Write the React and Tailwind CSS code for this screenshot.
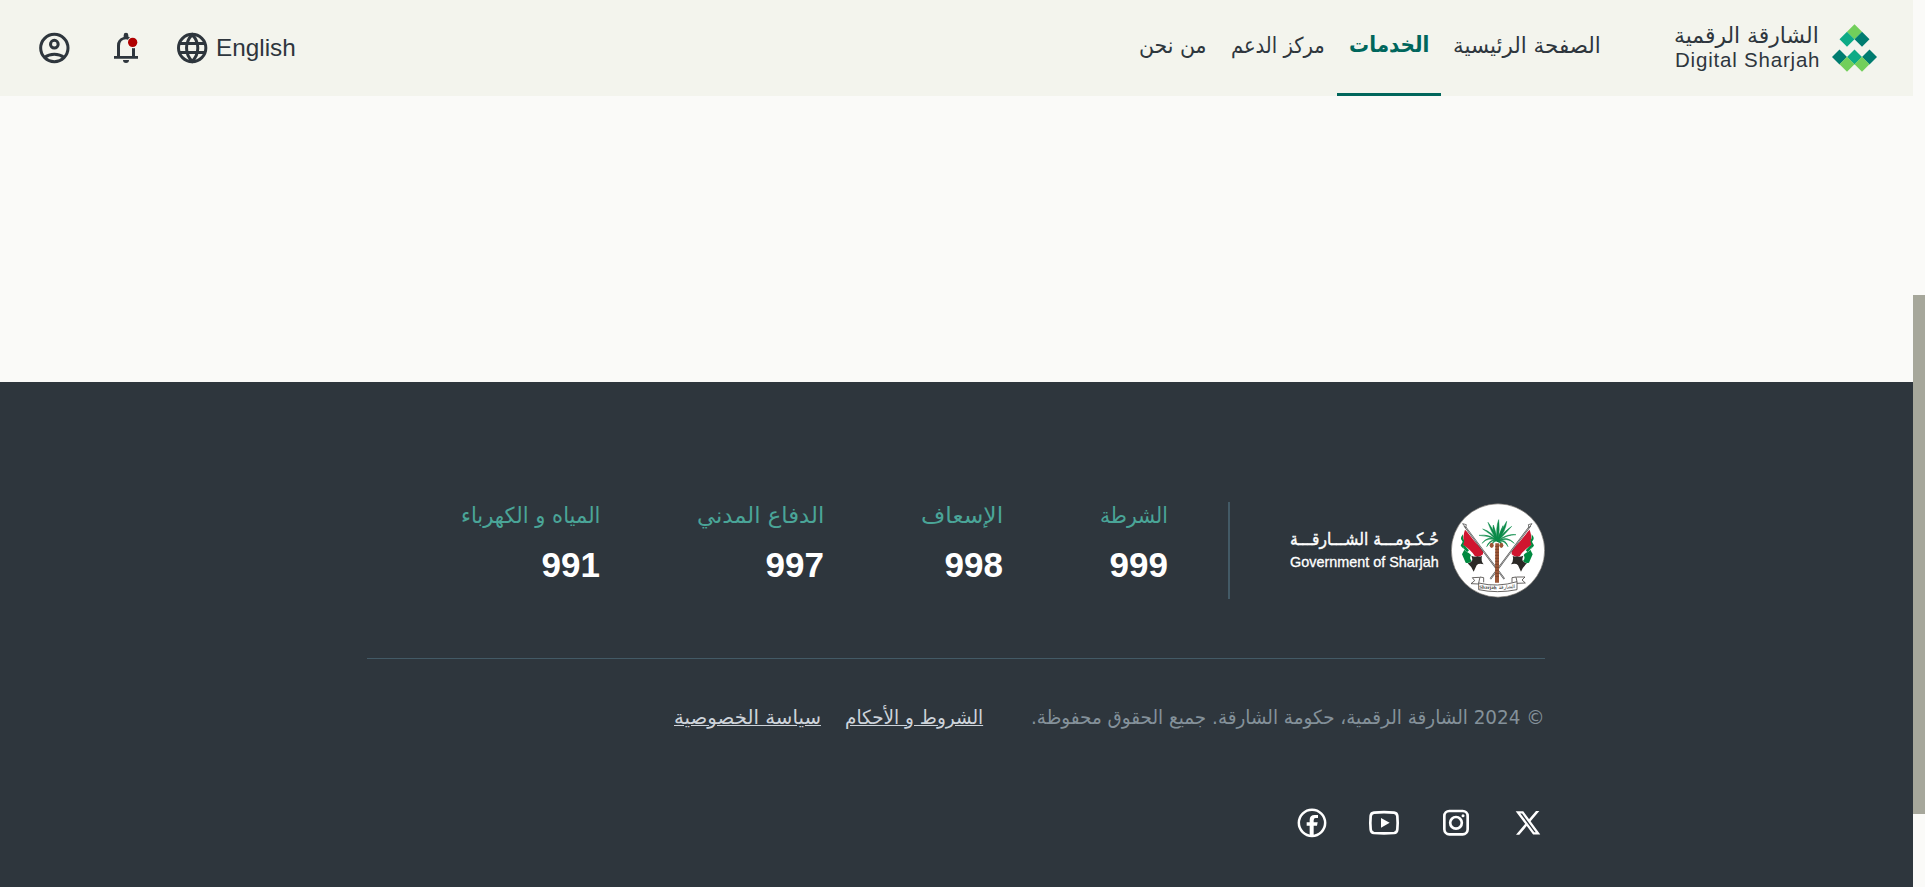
import { useLayoutEffect, useRef, useState } from "react";

const ARABIC = "font-['DejaVu_Sans',sans-serif]";
const LATIN = "font-['Liberation_Sans',Arial,sans-serif]";

// Arabic run that is condensed horizontally to the width of its column.
function Fit({ width, className = "", children }) {
  const ref = useRef(null);
  const [scale, setScale] = useState(1);
  useLayoutEffect(() => {
    setScale(width / ref.current.offsetWidth);
  }, [width, children]);
  return (
    <span className="flex justify-start" style={{ width }}>
      <span
        ref={ref}
        className={`inline-block shrink-0 origin-right whitespace-nowrap ${className}`}
        style={{ transform: `scaleX(${scale})` }}
      >
        {children}
      </span>
    </span>
  );
}

const nav = [
  { label: "الصفحة الرئيسية", width: 148 },
  { label: "الخدمات", width: 80, active: true },
  { label: "مركز الدعم", width: 94 },
  { label: "من نحن", width: 68 },
];

const emergency = [
  { label: "الشرطة", number: "999", width: 68 },
  { label: "الإسعاف", number: "998", width: 82 },
  { label: "الدفاع المدني", number: "997", width: 127 },
  { label: "المياه و الكهرباء", number: "991", width: 139 },
];

function SharjahMark() {
  const d = (x, y, fill) => (
    <path key={`${x}-${y}`} d={`M${x} ${y - 22.5}l22.5 22.5-22.5 22.5-22.5-22.5z`} fill={fill} />
  );
  return (
    <svg className="h-[48px] w-[45px]" viewBox="636 71 135 144">
      {d(703.5, 94, "#72cf5b")}
      {d(681, 116.5, "#0dab86")}
      {d(726, 116.5, "#007c70")}
      {d(658.5, 170, "#007c70")}
      {d(703.5, 170, "#0dab86")}
      {d(748.5, 170, "#007c70")}
      {d(681, 192, "#72cf5b")}
      {d(726, 192, "#72cf5b")}
    </svg>
  );
}

function AccountIcon() {
  return (
    <svg className="h-9 w-9" viewBox="108 90 108 108" fill="none" stroke="#2e363d" strokeWidth="9">
      <circle cx="163" cy="144" r="41" />
      <circle cx="163" cy="132.500" r="11.500" />
      <path d="M133 173Q146 163 163 163T193 173" />
    </svg>
  );
}

function BellIcon() {
  return (
    <svg className="h-9 w-9" viewBox="324 90 108 108">
      <path
        fill="#2e363d"
        fillRule="evenodd"
        d="M378 98.500a7 7 0 0 1 7 7V110L390 112A18 18 0 0 0 384 119Q381 118 378 118Q360 119 360 137V168H396V144Q400 146 405 144V168H414V176H342V168H351V137Q351 117 371 111V105.500a7 7 0 0 1 7-7z"
      />
      <path fill="#2e363d" d="M369 180H387A9 9 0 0 1 369 180z" />
      <circle cx="398" cy="127" r="14" fill="#b00000" />
    </svg>
  );
}

function GlobeIcon() {
  return (
    <svg className="h-9 w-9" viewBox="522 90 108 108" fill="none" stroke="#2e363d" strokeWidth="9">
      <circle cx="576.500" cy="144" r="41" />
      <path d="M576.500 104C554 127 554 161 576.500 184C599 161 599 127 576.500 104zM539 130.500H614M539 157.500H614" />
    </svg>
  );
}

function FlagPole() {
  return (
    <g>
      <path d="M78 106L64 130L69 140L65 150L76 162L69 176L84 204L104 229L114 210L134 207L132 176z" fill="#fff" />
      <path d="M78 104L84 110Q104 138 132 166L132 178Q122 188 108 184Q98 166 72 150Q71 144 75 138Q70 128 78 104z" fill="#d0152f" />
      <path d="M72 118Q65 126 66 132L71 140L65 152L74 162L72 152L76 138Q70 130 72 118z" fill="#00893f" />
      <path d="M76 164L69 178L80 203Q92 206 98 198Q90 190 96 180Q90 172 82 170z" fill="#00893f" />
      <path d="M66 146L78 153L90 166L84 172L76 163z" fill="#00893f" />
      <path d="M97 182Q108 187 116 184Q124 186 129 182Q125 198 134 208Q119 204 113 211Q108 222 104 230Q98 215 86 205Q100 202 100 193Q99 187 97 182z" fill="#2b2926" />
      <path d="M76 92L196 252" stroke="#444" strokeWidth="5" />
      <path d="M76 92L196 252" stroke="#ddd" strokeWidth="2" />
      <path d="M71 86l11 3-2 9z" fill="#fff" stroke="#333" strokeWidth="2" />
    </g>
  );
}

function Emblem() {
  const fronds = [
    "M174 138Q170 98 179 74Q183 101 177 138",
    "M174 138Q154 106 147 82Q164 104 177 137",
    "M174 138Q150 112 131 102Q156 109 178 138",
    "M174 138Q150 121 120 121Q151 116 177 138",
    "M174 137Q149 124 129 145Q147 119 177 137",
    "M174 138Q159 131 143 155Q153 128 177 138",
    "M174 138Q167 136 158 150Q162 132 177 138",
    "M174 138Q186 105 203 79Q201 106 177 138",
    "M174 138Q195 109 218 94Q201 114 177 138",
    "M174 138Q204 115 231 119Q202 119 177 139",
    "M174 138Q204 120 226 145Q204 125 177 140",
    "M174 138Q200 129 207 155Q195 134 177 140",
    "M174 138Q186 136 191 151Q182 142 176 140",
    "M174 138Q158 102 163 90Q168 103 177 138",
    "M174 138Q184 107 192 92Q190 107 177 138",
  ];
  return (
    <svg className="h-[95px] w-[94px]" viewBox="36 24 282 285">
      <circle cx="177" cy="166.500" r="140" fill="#fff" stroke="#77736d" strokeWidth="2" />
      <FlagPole />
      <g transform="translate(350 0) scale(-1 1)"><FlagPole /></g>
      <path d="M169 145H180V263H168z" fill="#9c5636" />
      <path d="M168 154h12m-12 9h12m-12 9h12m-12 9h12m-12 9h12m-12 9h12m-12 9h12m-12 9h12m-12 9h12m-12 9h12m-12 9h12" stroke="#6e3b25" strokeWidth="2" />
      <g fill="#0b8a49" stroke="#0b8a49" strokeWidth="1.500">
        {fronds.map((p) => <path key={p} d={`${p}z`} />)}
      </g>
      <g fill="#9c5636">
        <ellipse cx="158" cy="151" rx="6" ry="8" />
        <ellipse cx="187" cy="151" rx="6" ry="8" />
      </g>
      <path d="M119 264Q175 278 234 260L234 284Q175 296 119 284zM119 264L123 246L134 248L134 262M119 267L96 266L107 257L100 248L122 247M234 260L231 246L219 248L219 262M234 265L259 264L249 255L258 246L232 246" fill="#fff" stroke="#4a4744" strokeWidth="2.500" />
      <text x="121" y="281" className="font-['Liberation_Serif',serif]" fontSize="15" fontWeight="bold" fill="#333" direction="ltr" transform="rotate(2 121 281)">Sharjah</text>
      <text x="179" y="283" className={ARABIC} fontSize="15" fill="#333" direction="ltr" textLength="50" lengthAdjust="spacingAndGlyphs" transform="rotate(-5 179 283)">الشارقة</text>
    </svg>
  );
}

const social = [
  {
    name: "X",
    art: (
      <g transform="translate(738 63)">
        <path d="M6 4H20L66 67H53z" fill="none" stroke="#fff" strokeWidth="7" />
        <path d="M60 0H70L42 33L37 27zM0 71L29 37L34 43L10 71z" fill="#fff" />
      </g>
    ),
    box: "720 45 108 108",
  },
  {
    name: "Instagram",
    art: (
      <g fill="none" stroke="#fff" strokeWidth="8">
        <rect x="523" y="63" width="70" height="70" rx="15" />
        <circle cx="558" cy="98.500" r="17.500" />
        <circle cx="579" cy="77" r="4.500" fill="#fff" stroke="none" />
      </g>
    ),
    box: "504 45 108 108",
  },
  {
    name: "YouTube",
    art: (
      <g>
        <path d="M312 68Q342 65 372 68Q381 69 382 78Q384 98 382 118Q381 128 372 129Q342 131 312 129Q303 128 302 118Q300 98 302 78Q303 69 312 68z" fill="none" stroke="#fff" strokeWidth="8" />
        <path d="M333 84V113L359 98.500z" fill="#fff" />
      </g>
    ),
    box: "288 45 108 108",
  },
  {
    name: "Facebook",
    art: (
      <g>
        <circle cx="126" cy="98.500" r="39.500" fill="none" stroke="#fff" strokeWidth="7.500" />
        <path d="M119 137V107H110V97H119V90Q119 75 134 75H144V84H137Q131 84 131 91V97H143L141 107H131V137z" fill="#fff" />
      </g>
    ),
    box: "72 45 108 108",
  },
];

export default function App() {
  return (
    <div dir="rtl" className="flex h-[887px] w-[1925px] flex-row overflow-hidden bg-[#fafaf8]">
      <div className="order-1 flex h-full w-[1913px] flex-col">
        <header className="flex h-24 shrink-0 items-stretch justify-between bg-[#f3f4ed] pl-9 pr-9">
          <div className="flex items-stretch">
            <a className="flex items-center gap-[13px]">
              <SharjahMark />
              <span className="flex w-[144px] flex-col text-[#2e363d]">
                <Fit width={145} className={`h-[25px] text-[22px] leading-[23px] ${ARABIC}`}>الشارقة الرقمية</Fit>
                <span dir="ltr" className={`h-[24px] whitespace-nowrap text-[20.500px] leading-[22px] tracking-[0.8px] ${LATIN}`}>
                  Digital Sharjah
                </span>
              </span>
            </a>
            <nav className="mr-[62px] flex items-stretch">
              {nav.map((n) => (
                <a
                  key={n.label}
                  className={`flex items-start border-b-[3px] px-3 ${n.active ? "border-[#00665c] pt-[30px] font-bold text-[#00665c]" : "border-transparent pt-[31px] text-[#2e363d]"}`}
                >
                  <Fit width={n.width} className={`text-[22px] leading-[30px] ${ARABIC}`}>{n.label}</Fit>
                </a>
              ))}
            </nav>
          </div>
          <div dir="ltr" className="flex items-center gap-9">
            <AccountIcon />
            <BellIcon />
            <span className="-ml-[6px] flex items-center gap-[6px]">
              <GlobeIcon />
              <span className={`text-[24.300px] leading-9 text-[#2e363d] ${LATIN}`}>English</span>
            </span>
          </div>
        </header>

        <main className="h-[286px] shrink-0" />

        <footer className="flex flex-1 justify-center bg-[#2e363d] pl-[367px] pr-[368px] pt-[120px]">
          <div className="flex w-full flex-col">
            <div className="flex h-[157px] items-start border-b border-[#435a66]">
              <div className="flex w-[317px] items-center gap-[12px] border-l-2 border-[#435a66]">
                <Emblem />
                <div className="mt-px flex w-[149px] flex-col text-white">
                  <Fit width={149} className={`h-[22px] text-[17px] leading-[21px] [-webkit-text-stroke:0.4px_white] ${ARABIC}`}>حُـكـومـــة الشـــارقـــة</Fit>
                  <span dir="ltr" className={`whitespace-nowrap text-[14.400px] leading-[22px] [-webkit-text-stroke:0.3px_white] ${LATIN}`}>
                    Government of Sharjah
                  </span>
                </div>
                <span className="h-[97px] w-0" />
              </div>
              <div className="mr-[60px] flex gap-[97px]">
                {emergency.map((e) => (
                  <div key={e.number} className="-mt-px flex flex-col items-start">
                    <Fit width={e.width} className={`text-[22px] leading-[30px] text-[#4aa598] ${ARABIC}`}>{e.label}</Fit>
                    <span className={`mt-[14px] text-[35px] font-bold leading-[40px] text-white ${LATIN}`}>{e.number}</span>
                  </div>
                ))}
              </div>
            </div>

            <div className="mt-[44px] flex h-[31px] items-start leading-[30px]">
              <Fit width={514} className={`text-[19.500px] text-[#84919a] ${ARABIC}`}>
                © 2024 الشارقة الرقمية، حكومة الشارقة. جميع الحقوق محفوظة.
              </Fit>
              <span className="mr-[48px]">
                <Fit width={138} className={`text-[19.500px] text-[#cdd3da] underline ${ARABIC}`}>الشروط و الأحكام</Fit>
              </span>
              <span className="mr-[24px]">
                <Fit width={147} className={`text-[19.500px] text-[#cdd3da] underline ${ARABIC}`}>سياسة الخصوصية</Fit>
              </span>
            </div>

            <div className="-mr-px mt-[71px] flex gap-9">
              {social.map((s) => (
                <a key={s.name} aria-label={s.name}>
                  <svg className="h-9 w-9" viewBox={s.box}>{s.art}</svg>
                </a>
              ))}
            </div>
          </div>
        </footer>
      </div>
      <div className="h-full w-3 bg-[#fafaf8] pt-[295px]">
        <div className="h-[519px] bg-[#a6a79b]" />
      </div>
    </div>
  );
}
